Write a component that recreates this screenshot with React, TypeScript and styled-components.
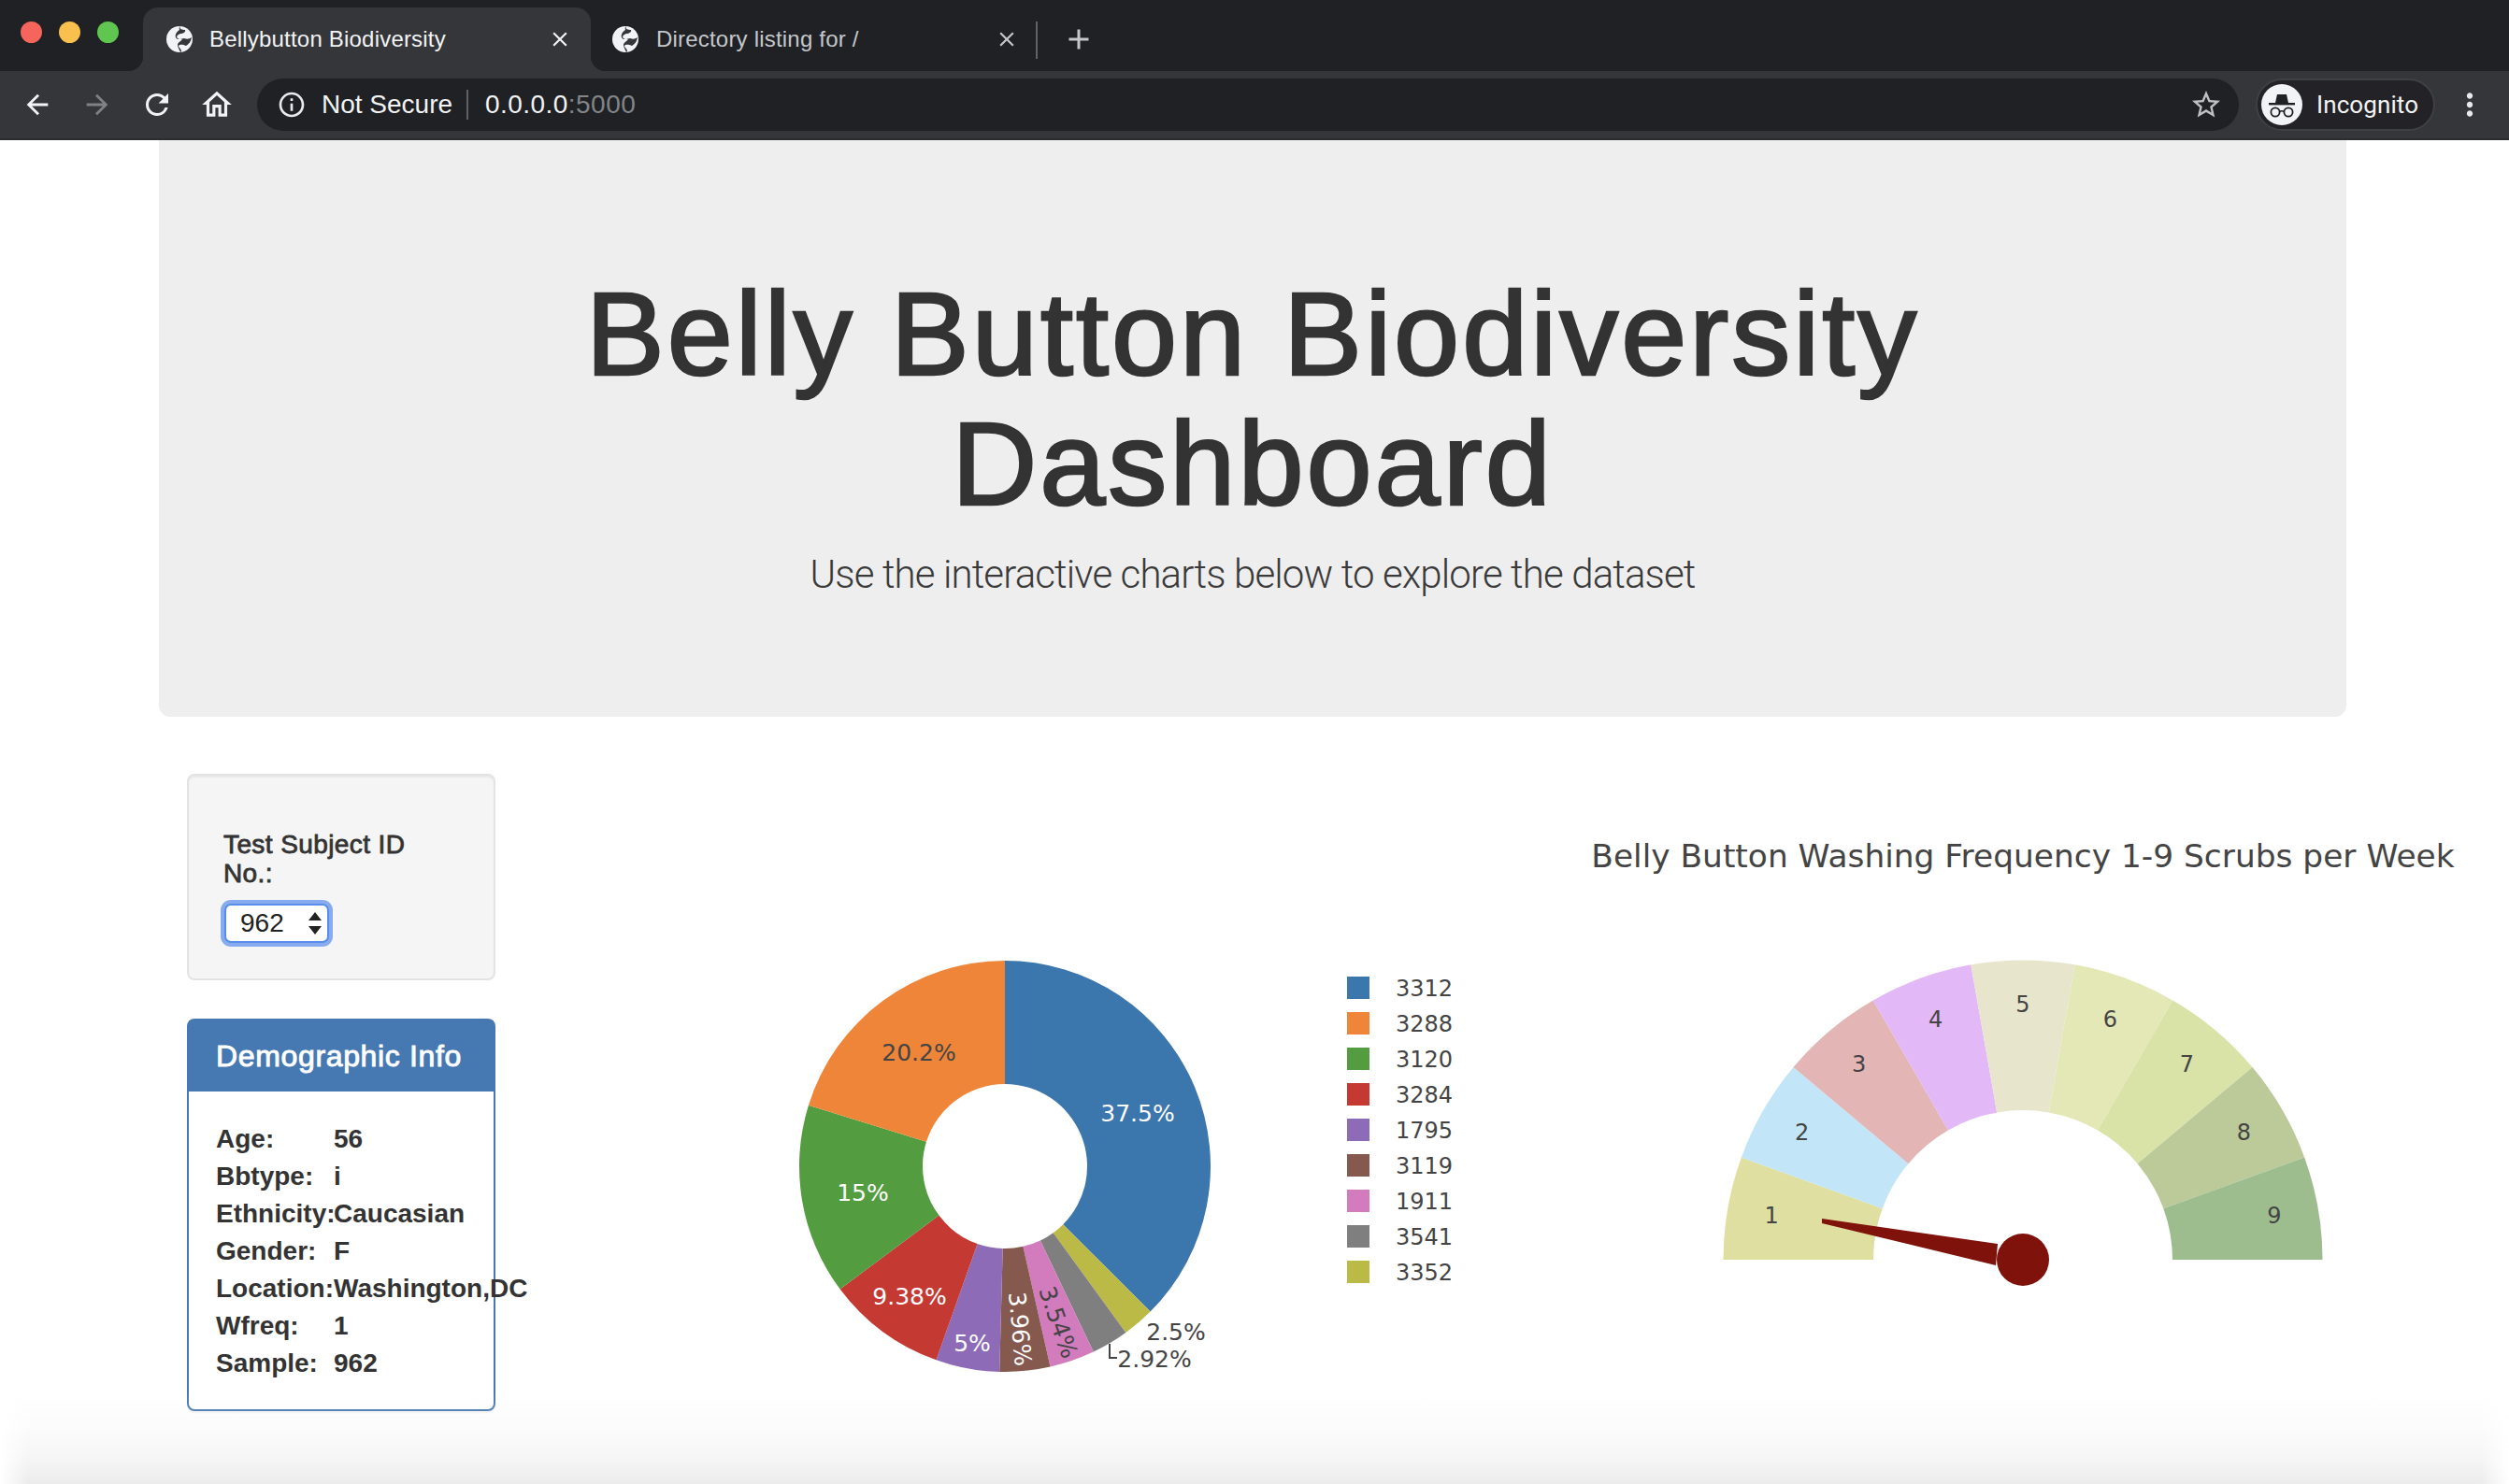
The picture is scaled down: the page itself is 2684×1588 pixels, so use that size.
import styled, { createGlobalStyle, css } from 'styled-components';
import { MdArrowBack, MdArrowForward, MdRefresh, MdOutlineHome, MdInfoOutline, MdStarBorder, MdClose, MdAdd, MdMoreVert } from 'react-icons/md';

const GlobalStyle = createGlobalStyle`
  html, body {
    margin: 0;
    padding: 0;
    background: #fff;
    overflow: hidden;
  }
  * {
    box-sizing: border-box;
  }
`;

const sans = '"Liberation Sans", Arial, sans-serif';
const plotFont = '"DejaVu Sans", Verdana, sans-serif';

const pieSlices = [
  { id: '3312', value: 37.5, color: '#3b76ad' },
  { id: '3352', value: 2.5, color: '#bcba47' },
  { id: '3541', value: 2.92, color: '#7f7f7f' },
  { id: '1911', value: 3.54, color: '#d27bbd' },
  { id: '3119', value: 3.96, color: '#85594e' },
  { id: '1795', value: 5, color: '#8d6bb6' },
  { id: '3284', value: 9.38, color: '#c43a33' },
  { id: '3120', value: 15, color: '#539d40' },
  { id: '3288', value: 20.2, color: '#ef8538' },
];

const legendOrder = ['3312', '3288', '3120', '3284', '1795', '3119', '1911', '3541', '3352'];

const pieLabels = [
  { text: '37.5%', x: 1217, y: 1191, fill: '#fff' },
  { text: '20.2%', x: 983, y: 1126, fill: '#444' },
  { text: '15%', x: 923, y: 1276, fill: '#fff' },
  { text: '9.38%', x: 973, y: 1387, fill: '#fff' },
  { text: '5%', x: 1040, y: 1437, fill: '#fff' },
  { text: '3.96%', x: 1091, y: 1422, fill: '#fff', rotate: 85 },
  { text: '3.54%', x: 1132, y: 1415, fill: '#444', rotate: 71 },
  { text: '2.5%', x: 1258, y: 1425, fill: '#444' },
  { text: '2.92%', x: 1235, y: 1454, fill: '#444' },
];

const gaugeColors = ['#e0dfa2', '#c2e5f8', '#e3b5b5', '#e2b8f7', '#e7e6cd', '#e4e7b6', '#dae3a7', '#bbca98', '#9dbd8f'];

const demographics = [
  ['Age:', '56'],
  ['Bbtype:', 'i'],
  ['Ethnicity:', 'Caucasian'],
  ['Gender:', 'F'],
  ['Location:', 'Washington,DC'],
  ['Wfreq:', '1'],
  ['Sample:', '962'],
];

// angle in degrees, clockwise from 12 o'clock
function polar(cx: number, cy: number, r: number, deg: number) {
  const a = (deg * Math.PI) / 180;
  return [cx + r * Math.sin(a), cy - r * Math.cos(a)];
}

function ringPath(cx: number, cy: number, outer: number, inner: number, from: number, to: number) {
  const [x1, y1] = polar(cx, cy, outer, from);
  const [x2, y2] = polar(cx, cy, outer, to);
  const [x3, y3] = polar(cx, cy, inner, to);
  const [x4, y4] = polar(cx, cy, inner, from);
  const large = to - from > 180 ? 1 : 0;
  return `M${x1} ${y1}A${outer} ${outer} 0 ${large} 1 ${x2} ${y2}L${x3} ${y3}A${inner} ${inner} 0 ${large} 0 ${x4} ${y4}Z`;
}

function GlobeIcon() {
  return (
    <svg width="30" height="30" viewBox="0 0 30 30">
      <circle cx="15" cy="15" r="14" fill="#f1f3f4" />
      <path d="M16 1c-2 3 2 4 5 4 1 2-2 4-5 4-3 1-5 3-3 5 2 2 5 0 7 0 3 1 5 1 8-1-1 5-3 7-6 9-3-1-6-2-8 0 0 2 3 3 3 6l-1 1c-1-3-3-5-3-8 0-3 5-4 5-7-2 1-6 2-7-1-1-3 1-6 4-8 0-1-1-3 1-4z" fill="#35363a" />
    </svg>
  );
}

function IncognitoIcon() {
  return (
    <svg width="44" height="44" viewBox="0 0 44 44">
      <circle cx="22" cy="22" r="22" fill="#f1f3f4" />
      <path d="M15 20l2-9h10l2 9z" fill="#202124" />
      <rect x="8" y="20" width="28" height="2.4" fill="#202124" />
      <circle cx="15" cy="30" r="4.6" fill="none" stroke="#202124" strokeWidth="1.8" />
      <circle cx="29" cy="30" r="4.6" fill="none" stroke="#202124" strokeWidth="1.8" />
      <path d="M19.5 29.5q2.5-1.4 5 0" fill="none" stroke="#202124" strokeWidth="1.6" />
    </svg>
  );
}

function PieChart() {
  let start = 0;
  return (
    <ChartSvg width="975" height="700" viewBox="560 828 975 700">
      {pieSlices.map((slice) => {
        const from = start;
        start += slice.value * 3.6;
        return <path key={slice.id} d={ringPath(1075, 1248, 220, 88, from, start)} fill={slice.color} />;
      })}
      {pieLabels.map((label) => (
        <PieLabel
          key={label.text}
          x={label.x}
          y={label.y}
          fill={label.fill}
          textAnchor="middle"
          dominantBaseline="central"
          transform={label.rotate ? `rotate(${label.rotate} ${label.x} ${label.y})` : undefined}
        >
          {label.text}
        </PieLabel>
      ))}
      <path d="M1187 1438v15h8" fill="none" stroke="#444" strokeWidth="2" />
      {legendOrder.map((id, i) => (
        <g key={id}>
          <rect x="1441" y={1045 + i * 38} width="24" height="24" fill={pieSlices.find((s) => s.id === id)?.color} />
          <PlotText x="1493" y={1058 + i * 38} fill="#444" dominantBaseline="central">{id}</PlotText>
        </g>
      ))}
    </ChartSvg>
  );
}

function GaugeChart() {
  const cx = 2164;
  const cy = 1348;
  return (
    <ChartSvg width="1105" height="700" viewBox="1535 828 1105 700">
      <GaugeTitle x={cx} y="916" textAnchor="middle" dominantBaseline="central">
        Belly Button Washing Frequency 1-9 Scrubs per Week
      </GaugeTitle>
      {gaugeColors.map((color, i) => {
        const from = -90 + i * 20;
        const [lx, ly] = polar(cx, cy, 273, from + 10);
        return (
          <g key={color}>
            <path d={ringPath(cx, cy, 320.5, 160, from, from + 20)} fill={color} />
            <PlotText x={lx} y={ly} fill="#444" textAnchor="middle" dominantBaseline="central">{i + 1}</PlotText>
          </g>
        );
      })}
      <path d="M1949 1304L2137 1331L2135 1354L1949 1309Z" fill="#7f120b" />
      <circle cx={cx} cy={cy} r="28" fill="#7f120b" />
    </ChartSvg>
  );
}

export default function App() {
  return (
    <Page>
      <GlobalStyle />
      <BrowserChrome>
        <TabStrip>
          <TrafficLights>
            <Light $color="#f5655b" />
            <Light $color="#f9c04d" />
            <Light $color="#5fc74f" />
          </TrafficLights>
          <ActiveTab>
            <GlobeIcon />
            <TabTitle>Bellybutton Biodiversity</TabTitle>
            <TabClose><MdClose size={26} /></TabClose>
          </ActiveTab>
          <InactiveTab>
            <GlobeIcon />
            <TabTitle $dim>Directory listing for /</TabTitle>
            <TabClose $dim><MdClose size={26} /></TabClose>
          </InactiveTab>
          <TabSeparator />
          <NewTab><MdAdd size={36} /></NewTab>
        </TabStrip>
        <Toolbar>
          <NavButton><MdArrowBack size={34} /></NavButton>
          <NavButton $disabled><MdArrowForward size={34} /></NavButton>
          <NavButton><MdRefresh size={36} /></NavButton>
          <NavButton><MdOutlineHome size={38} /></NavButton>
          <Omnibox>
            <MdInfoOutline size={32} color="#e8eaed" />
            <SecurityText>Not Secure</SecurityText>
            <OmniDivider />
            <Url>0.0.0.0<UrlPort>:5000</UrlPort></Url>
            <StarSlot><MdStarBorder size={36} color="#bdc1c6" /></StarSlot>
          </Omnibox>
          <IncognitoPill>
            <IncognitoIcon />
            <IncognitoLabel>Incognito</IncognitoLabel>
          </IncognitoPill>
          <MenuButton><MdMoreVert size={38} /></MenuButton>
        </Toolbar>
      </BrowserChrome>
      <Container>
        <Jumbotron>
          <Heading>Belly Button Biodiversity Dashboard</Heading>
          <Lead>Use the interactive charts below to explore the dataset</Lead>
        </Jumbotron>
        <DashboardRow>
          <Sidebar>
            <Well>
              <WellLabel>Test Subject ID No.:</WellLabel>
              <SelectBox>
                962
                <svg width="16" height="26" viewBox="0 0 16 26">
                  <path d="M8 1l7 9H1zM8 25l7-9H1z" fill="#222" />
                </svg>
              </SelectBox>
            </Well>
            <Panel>
              <PanelHeading>Demographic Info</PanelHeading>
              <PanelBody>
                {demographics.map(([label, value]) => (
                  <InfoRow key={label}>
                    <span>{label}</span>
                    <span>{value}</span>
                  </InfoRow>
                ))}
              </PanelBody>
            </Panel>
          </Sidebar>
          <PieChart />
          <GaugeChart />
        </DashboardRow>
      </Container>
      <BottomFade />
    </Page>
  );
}

// the reference uses Helvetica Neue Medium; no such weight here, so thicken the regular cut
const medium = (stroke: number, spacing: number) => css`
  font-weight: 400;
  -webkit-text-stroke: ${stroke}px currentColor;
  letter-spacing: ${spacing}px;
`;

const Page = styled.div`
  position: relative;
  width: 2684px;
  height: 1588px;
  overflow: hidden;
  background: #fff;
  font-family: ${sans};
  color: #333;
`;

const BrowserChrome = styled.header`
  height: 150px;
  background: #35363a;
  border-bottom: 2px solid #2b2c2f;
`;

const TabStrip = styled.div`
  display: flex;
  align-items: flex-end;
  height: 76px;
  background: #202124;
`;

const TrafficLights = styled.div`
  display: flex;
  align-self: center;
  gap: 18px;
  width: 153px;
  padding-left: 22px;
  margin-top: -8px;
`;

const Light = styled.span<{ $color: string }>`
  width: 23px;
  height: 23px;
  border-radius: 50%;
  background: ${(p) => p.$color};
`;

const ActiveTab = styled.div`
  position: relative;
  display: flex;
  align-items: center;
  gap: 17px;
  width: 479px;
  height: 68px;
  padding: 0 20px 0 24px;
  border-radius: 16px 16px 0 0;
  background: #35363a;

  &::before,
  &::after {
    content: '';
    position: absolute;
    bottom: 0;
    width: 16px;
    height: 16px;
  }
  &::before {
    left: -16px;
    background: radial-gradient(circle at 0 0, #202124 16px, #35363a 16.5px);
  }
  &::after {
    right: -16px;
    background: radial-gradient(circle at 100% 0, #202124 16px, #35363a 16.5px);
  }
`;

const InactiveTab = styled.div`
  display: flex;
  align-items: center;
  gap: 18px;
  width: 476px;
  height: 68px;
  padding: 0 18px 0 22px;
`;

const TabTitle = styled.span<{ $dim?: boolean }>`
  font-size: 24px;
  letter-spacing: 0.2px;
  white-space: nowrap;
  color: ${(p) => (p.$dim ? '#c4c7cb' : '#f1f3f4')};
`;

const TabClose = styled.span<{ $dim?: boolean }>`
  display: flex;
  margin-left: auto;
  color: ${(p) => (p.$dim ? '#c4c7cb' : '#f1f3f4')};
`;

const TabSeparator = styled.span`
  align-self: flex-start;
  width: 2px;
  height: 40px;
  margin-top: 23px;
  background: #5f6368;
`;

const NewTab = styled.span`
  display: flex;
  align-self: center;
  margin: 8px 0 0 26px;
  color: #c4c7cb;
`;

const Toolbar = styled.div`
  display: flex;
  align-items: center;
  height: 72px;
  padding-left: 8px;
`;

const NavButton = styled.span<{ $disabled?: boolean }>`
  display: flex;
  justify-content: center;
  width: 64px;
  color: ${(p) => (p.$disabled ? '#7f8184' : '#f1f3f4')};
`;

const Omnibox = styled.div`
  display: flex;
  align-items: center;
  width: 2120px;
  height: 56px;
  margin-left: 11px;
  padding: 0 17px 0 21px;
  border-radius: 28px;
  background: #202124;
`;

const SecurityText = styled.span`
  margin-left: 16px;
  font-size: 28px;
  color: #f1f3f4;
`;

const OmniDivider = styled.span`
  width: 2px;
  height: 32px;
  margin: 0 18px 0 15px;
  background: #5f6368;
`;

const Url = styled.span`
  font-size: 28px;
  letter-spacing: 0.45px;
  color: #f1f3f4;
`;

const UrlPort = styled.span`
  color: #81858a;
`;

const StarSlot = styled.span`
  display: flex;
  margin-left: auto;
`;

const IncognitoPill = styled.div`
  display: flex;
  align-items: center;
  gap: 15px;
  width: 192px;
  height: 56px;
  margin-left: 18px;
  padding-left: 4px;
  border: 2px solid #3f4044;
  border-radius: 28px;
  background: #232226;
`;

const IncognitoLabel = styled.span`
  font-family: Roboto, ${sans};
  font-size: 26px;
  letter-spacing: 0.1px;
  color: #f1f3f4;
`;

const MenuButton = styled.span`
  display: flex;
  margin-left: 18px;
  color: #e8eaed;
`;

const Container = styled.main`
  width: 2340px;
  margin-left: 170px;
`;

const Jumbotron = styled.section`
  height: 617px;
  padding-top: 139px;
  border-radius: 0 0 12px 12px;
  background: #eee;
  text-align: center;
`;

const Heading = styled.h1`
  width: 1600px;
  margin: 0 auto;
  font-size: 126px;
  line-height: 138.6px;
  color: #333;
  ${medium(2.6, 3)}
`;

const Lead = styled.p`
  margin: 19px 0 0;
  font-family: Roboto, ${sans};
  font-size: 42px;
  font-weight: 300;
  letter-spacing: -0.87px;
  line-height: 60px;
  color: #3a3a3a;
`;

const DashboardRow = styled.div`
  display: flex;
  align-items: flex-start;
  height: 760px;
  margin-top: 61px;
`;

const Sidebar = styled.aside`
  flex: none;
  display: flex;
  flex-direction: column;
  gap: 41px;
  width: 330px;
  margin: 0 30px;
`;

const Well = styled.div`
  height: 221px;
  padding: 58px 37px 0;
  border: 2px solid #e3e3e3;
  border-radius: 8px;
  background: #f5f5f5;
  box-shadow: inset 0 2px 2px rgba(0, 0, 0, 0.05);
`;

const WellLabel = styled.div`
  width: 230px;
  font-size: 28px;
  line-height: 31px;
  color: #333;
  ${medium(0.8, 0.4)}
`;

const SelectBox = styled.div`
  display: flex;
  align-items: center;
  justify-content: space-between;
  width: 112px;
  height: 42px;
  margin: 17px 0 0 1px;
  padding: 0 5px 0 15px;
  border: 2px solid #5a8dea;
  border-radius: 7px;
  background: #fff;
  box-shadow: 0 0 0 4px #86abee;
  font-size: 28px;
  color: #222;
`;

const Panel = styled.div`
  height: 420px;
  border: 2px solid #4679b2;
  border-radius: 8px;
  background: #fff;
  box-shadow: 0 2px 2px rgba(0, 0, 0, 0.05);
`;

const PanelHeading = styled.div`
  height: 76px;
  padding: 0 29px;
  background: #4679b2;
  font-size: 32px;
  line-height: 76px;
  white-space: nowrap;
  color: #fff;
  ${medium(0.9, 0.65)}
`;

const PanelBody = styled.div`
  padding: 31px 29px;
`;

const InfoRow = styled.div`
  display: grid;
  grid-template-columns: 126px auto;
  font-size: 28px;
  font-weight: 700;
  line-height: 40px;
  white-space: nowrap;
  color: #333;
`;

const ChartSvg = styled.svg`
  flex: none;
  overflow: visible;
`;

const PlotText = styled.text`
  font-family: ${plotFont};
  font-size: 24px;
`;

const PieLabel = styled(PlotText)`
  font-size: 25px;
`;

const GaugeTitle = styled.text`
  font-family: ${plotFont};
  font-size: 34.4px;
  fill: #444;
`;

const BottomFade = styled.div`
  position: absolute;
  left: 0;
  right: 0;
  bottom: 0;
  height: 100px;
  background: linear-gradient(
    rgba(236, 236, 236, 0),
    rgba(236, 236, 236, 0.18) 40%,
    rgba(236, 236, 236, 0.5) 72%,
    #ececec
  );
  mask-image: linear-gradient(to right, transparent 0, #000 30px, #000 calc(100% - 30px), transparent 100%);
  pointer-events: none;
`;
